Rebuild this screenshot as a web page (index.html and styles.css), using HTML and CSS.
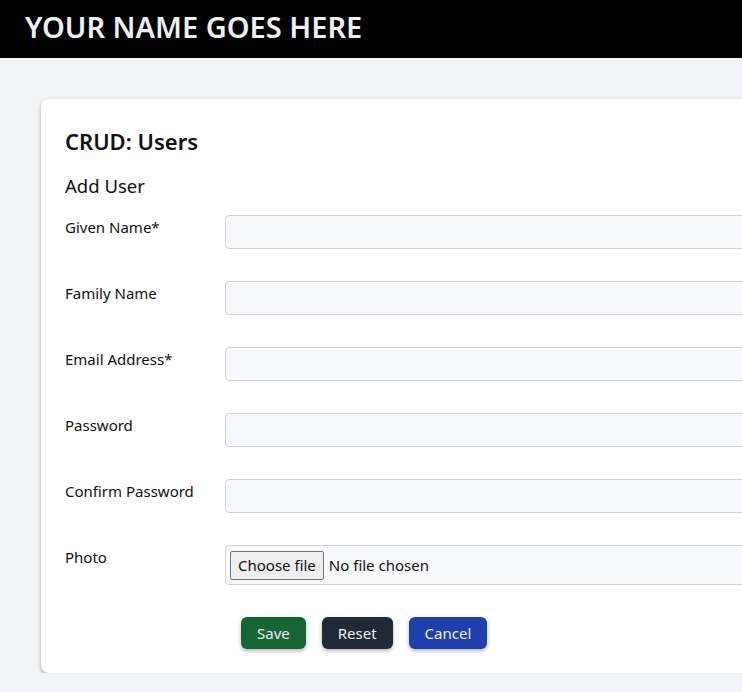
FILE: index.html
```html
<!DOCTYPE html>
<html lang="en">
<head>
<meta charset="utf-8">
<title>CRUD: Users</title>
<link rel="stylesheet" href="styles.css">
</head>
<body>
<header class="topbar">
  <h1 class="brand">YOUR NAME GOES HERE</h1>
</header>
<main class="main">
  <section class="card">
    <h2 class="card-title">CRUD: Users</h2>
    <h3 class="card-subtitle">Add User</h3>
    <form class="form">
      <div class="row">
        <label class="label" for="given">Given Name*</label>
        <input class="input" id="given" type="text">
      </div>
      <div class="row">
        <label class="label" for="family">Family Name</label>
        <input class="input" id="family" type="text">
      </div>
      <div class="row">
        <label class="label" for="email">Email Address*</label>
        <input class="input" id="email" type="email">
      </div>
      <div class="row">
        <label class="label" for="pw">Password</label>
        <input class="input" id="pw" type="password">
      </div>
      <div class="row">
        <label class="label" for="pw2">Confirm Password</label>
        <input class="input" id="pw2" type="password">
      </div>
      <div class="row">
        <label class="label" for="photo">Photo</label>
        <div class="file">
          <span class="file-btn">Choose file</span>
          <span class="file-text">No file chosen</span>
        </div>
      </div>
      <div class="actions">
        <button type="button" class="btn btn-save">Save</button>
        <button type="button" class="btn btn-reset">Reset</button>
        <button type="button" class="btn btn-cancel">Cancel</button>
      </div>
    </form>
  </section>
</main>
</body>
</html>
```
FILE: styles.css
```css
html, body {
  margin: 0;
  padding: 0;
  overflow: hidden;
}
body {
  background: #f2f3f5;
  font-family: "Noto Sans", "Open Sans", sans-serif;
  color: #111;
  width: 742px;
  height: 692px;
}
.topbar {
  background: #000;
  height: 58px;
  box-sizing: border-box;
  display: flex;
  align-items: center;
  padding: 0 0 6px 25px;
}
.brand {
  margin: 0;
  color: #eef0f4;
  font-size: 29px;
  font-weight: 600;
  letter-spacing: 0;
}
.main {
  padding: 41px 0 0 41px;
  overflow: hidden;
}
.card {
  width: 900px;
  background: #fff;
  border-radius: 8px;
  box-shadow: 0 2px 4px rgba(0,0,0,0.3);
  padding: 27px 24px 24px 24px;
  box-sizing: border-box;
}
.card-title {
  margin: 0;
  font-size: 22px;
  font-weight: 600;
  line-height: 30px;
}
.card-subtitle {
  margin: 17px 0 16px;
  font-size: 18.5px;
  font-weight: 400;
  line-height: 26px;
}
.form {
  display: flex;
  flex-direction: column;
  gap: 32px;
}
.row {
  display: flex;
  align-items: flex-start;
}
.label {
  width: 160px;
  flex: none;
  font-size: 15px;
  line-height: 20px;
  padding-top: 2px;
}
.input {
  flex: 1;
  height: 34px;
  box-sizing: border-box;
  border: 1px solid #cfd1d6;
  border-radius: 4px;
  background: #f8f9fb;
  margin: 0;
}
.file {
  flex: 1;
  height: 40px;
  box-sizing: border-box;
  border: 1px solid #cfd1d6;
  border-radius: 4px;
  background: #f8f9fb;
  display: flex;
  align-items: center;
  padding-left: 4px;
  font-size: 15px;
}
.file-btn {
  border: 1px solid #767676;
  border-radius: 2px;
  background: #efefef;
  padding: 3px 7px;
  height: 29px;
  box-sizing: border-box;
  display: flex;
  align-items: center;
  color: #111;
}
.file-text {
  margin-left: 5px;
}
.actions {
  display: flex;
  gap: 16px;
  padding-left: 176px;
}
.btn {
  height: 32px;
  border: none;
  border-radius: 6px;
  color: #eef0f4;
  font-family: inherit;
  font-size: 15px;
  padding: 0 16px;
  box-shadow: 0 2px 4px rgba(0,0,0,0.3);
}
.btn-save { background: #166534; }
.btn-reset { background: #1f2937; }
.btn-cancel { background: #1e40af; }
```
